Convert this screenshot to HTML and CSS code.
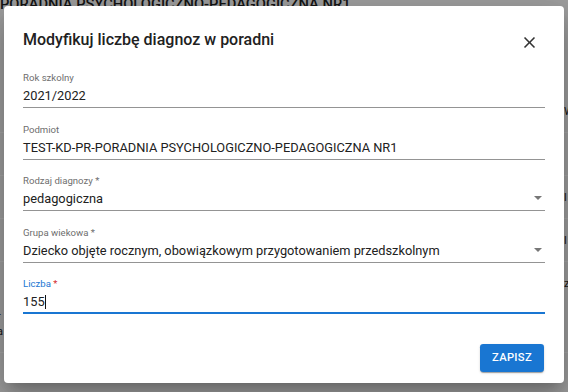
FILE: index.html
```html
<!DOCTYPE html>
<html lang="pl">
<head>
<meta charset="utf-8">
<title>Modyfikuj liczbę diagnoz w poradni</title>
<link rel="stylesheet" href="styles.css">
</head>
<body>
<div class="page">
  <div class="page-title">PORADNIA PSYCHOLOGICZNO-PEDAGOGICZNA NR1</div>
  <div class="bg-table">
    <div class="bg-row"><span class="bg-l"></span><span class="bg-r">W</span></div>
    <div class="bg-row"><span class="bg-l"></span><span class="bg-r"></span></div>
    <div class="bg-row"><span class="bg-l"></span><span class="bg-r">l</span></div>
    <div class="bg-row"><span class="bg-l"></span><span class="bg-r">l</span></div>
    <div class="bg-row tall"><span class="bg-l">r<br>a</span><span class="bg-r">z</span></div>
    <div class="bg-row"><span class="bg-l"></span><span class="bg-r"></span></div>
  </div>
</div>

<div class="dialog" role="dialog">
  <div class="dialog-header">
    <h2 class="dialog-title">Modyfikuj liczbę diagnoz w poradni</h2>
    <button class="close" aria-label="Zamknij">
      <svg viewBox="0 0 24 24" width="19" height="19"><path d="M19 6.41 17.590 5 12 10.59 6.41 5 5 6.41 10.59 12 5 17.59 6.41 19 12 13.41 17.59 19 19 17.59 13.41 12z"/></svg>
    </button>
  </div>
  <div class="dialog-content">
    <div class="field">
      <div class="field-label">Rok szkolny</div>
      <div class="field-value">2021/2022</div>
    </div>
    <div class="field">
      <div class="field-label">Podmiot</div>
      <div class="field-value">TEST-KD-PR-PORADNIA PSYCHOLOGICZNO-PEDAGOGICZNA NR1</div>
    </div>
    <div class="field">
      <div class="field-label">Rodzaj diagnozy *</div>
      <div class="field-value">pedagogiczna<svg class="arrow" viewBox="0 0 8 4" width="8" height="4"><polygon points="0,0 8,0 4,4"/></svg></div>
    </div>
    <div class="field">
      <div class="field-label">Grupa wiekowa *</div>
      <div class="field-value">Dziecko objęte rocznym, obowiązkowym przygotowaniem przedszkolnym<svg class="arrow" viewBox="0 0 8 4" width="8" height="4"><polygon points="0,0 8,0 4,4"/></svg></div>
    </div>
    <div class="field focused">
      <div class="field-label">Liczba <span class="req">*</span></div>
      <div class="field-value">155<span class="caret"></span></div>
    </div>
  </div>
  <div class="dialog-actions">
    <button class="btn">Zapisz</button>
  </div>
</div>
</body>
</html>
```

FILE: styles.css
```css
html, body {
  margin: 0;
  padding: 0;
}
body {
  width: 568px;
  height: 392px;
  overflow: hidden;
  position: relative;
  background: #9e9e9e;
  font-family: Roboto, "Noto Sans", "Liberation Sans", sans-serif;
}

/* dimmed page behind the dialog */
.page {
  color: #141414;
}
.page-title {
  font-size: 14.7px;
  font-weight: 500;
  line-height: 16px;
  margin-top: -4px;
  white-space: nowrap;
}
.bg-table {
  margin-top: 78px;
}
.bg-row {
  display: flex;
  justify-content: space-between;
  height: 42px;
  border-bottom: 1px solid #a6a6a6;
  font-size: 11px;
  line-height: 15px;
}
.bg-row.tall {
  height: 90px;
}
.bg-l {
  margin-left: -3px;
  padding-top: 14px;
}
.tall .bg-l {
  padding-top: 47px;
}
.bg-r {
  margin-right: -4px;
  padding-top: 14px;
  width: 8px;
}

/* dialog */
.dialog {
  position: absolute;
  left: 4px;
  top: 6px;
  width: 560px;
  height: 377px;
  box-sizing: border-box;
  background: #fff;
  border-radius: 4px;
  display: flex;
  flex-direction: column;
  box-shadow: 0 9px 12px -6px rgba(0,0,0,0.2), 0 19px 30px 2px rgba(0,0,0,0.14), 0 7px 37px 6px rgba(0,0,0,0.12);
}
.dialog-header {
  display: flex;
  align-items: flex-start;
  justify-content: space-between;
  height: 24px;
  padding: 22px 19px 0 19px;
}
.dialog-title {
  margin: 0;
  font-size: 16px;
  font-weight: 500;
  line-height: 24px;
  color: #212121;
}
.close {
  width: 32px;
  height: 32px;
  margin: -2px 0 -6px 0;
  padding: 0;
  border: 0;
  background: transparent;
  display: flex;
  align-items: center;
  justify-content: center;
  fill: #333;
}

.dialog-content {
  padding: 20px 19px 0 19px;
}
.field {
  margin-bottom: 15.5px;
}
.field-label {
  font-size: 9.6px;
  line-height: 12px;
  color: #6e6e6e;
  margin-bottom: 4px;
}
.field-value {
  display: flex;
  align-items: center;
  height: 16px;
  font-size: 12.8px;
  line-height: 16px;
  color: #212121;
  padding-bottom: 3px;
  border-bottom: 1px solid #949494;
  white-space: nowrap;
}
.arrow {
  margin-left: auto;
  margin-right: 3.5px;
  align-self: flex-start;
  margin-top: 5px;
  fill: #777;
}
.focused .field-label {
  color: #1976d2;
}
.req {
  color: #d32f2f;
}
.focused .field-value {
  padding-bottom: 2px;
  border-bottom: 2px solid #1976d2;
}
.caret {
  display: inline-block;
  width: 1px;
  height: 14px;
  margin-left: 0.5px;
  background: #111;
}

.dialog-actions {
  margin-top: auto;
  display: flex;
  justify-content: flex-end;
  padding: 0 20px 11px 20px;
}
.btn {
  font-family: Roboto, "Noto Sans", sans-serif;
  font-size: 11.2px;
  font-weight: 500;
  line-height: 18px;
  letter-spacing: 0.32px;
  text-transform: uppercase;
  color: #fff;
  background: #1976d2;
  border: 0;
  border-radius: 3.2px;
  padding: 5px 12px;
  box-shadow: 0 2px 1px -1px rgba(0,0,0,0.2), 0 1px 1px 0 rgba(0,0,0,0.14), 0 1px 3px 0 rgba(0,0,0,0.12);
}
```
